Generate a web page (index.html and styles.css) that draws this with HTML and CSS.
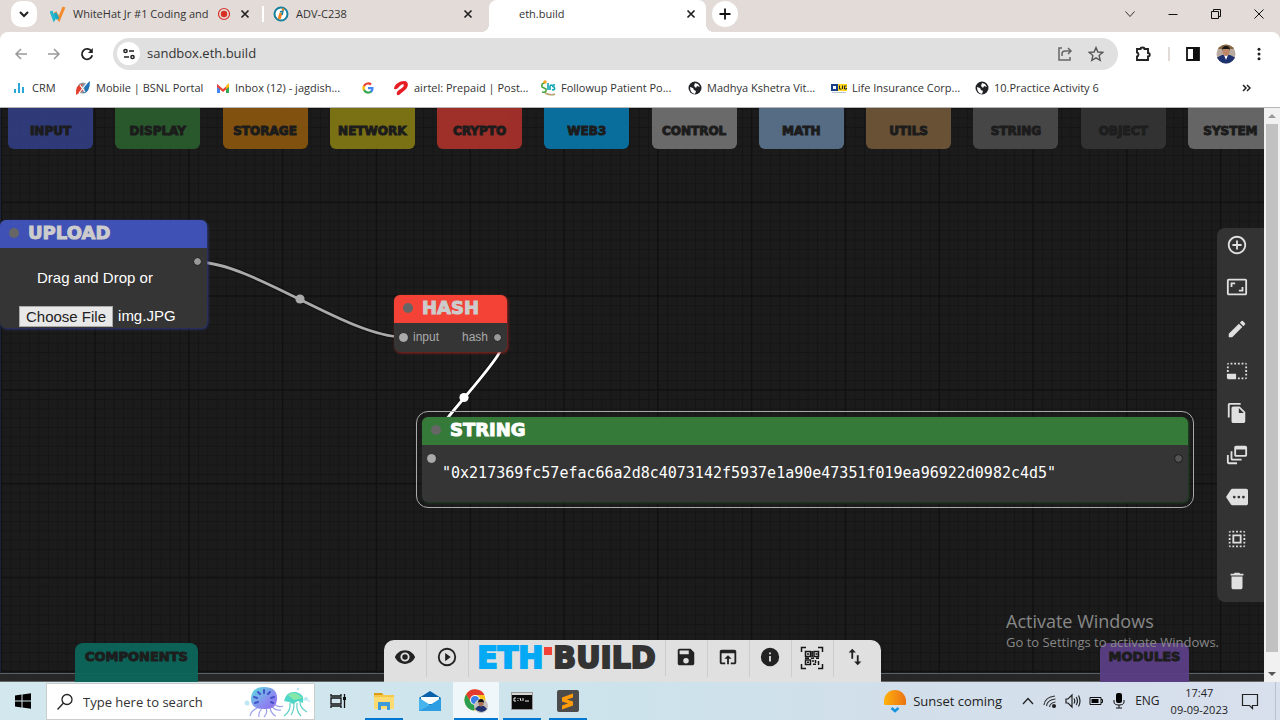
FILE: index.html
```html
<!DOCTYPE html>
<html lang="en">
<head>
<meta charset="utf-8">
<title>eth.build</title>
<link rel="stylesheet" href="styles.css">
</head>
<body>
<header class="tabstrip">
  <button class="round-btn" aria-label="Search tabs"><svg class="i12" viewBox="0 0 12 12"><path d="M2 4l4 4 4-4" fill="none" stroke="#222" stroke-width="2"/></svg></button>
  <div class="tab tab-first">
    <svg class="i16" viewBox="0 0 16 16"><path d="M1 5l3 8 3-5" fill="none" stroke="#1fb5cf" stroke-width="3"/><path d="M5 6l4 7 5-12" fill="none" stroke="#f58a2c" stroke-width="3"/><path d="M5 7l3 6" stroke="#18a9c4" stroke-width="3"/></svg>
    <span class="tab-title">WhiteHat Jr #1 Coding and</span>
    <svg class="i14" viewBox="0 0 14 14"><circle cx="7" cy="7" r="5.500" fill="none" stroke="#d93025" stroke-width="1.200"/><circle cx="7" cy="7" r="3.200" fill="#d93025"/></svg>
    <button class="icon-btn" aria-label="Close tab"><svg class="i10" viewBox="0 0 10 10"><path d="M1.500 1.500l7 7m0-7l-7 7" stroke="#222" stroke-width="1.700"/></svg></button>
  </div>
  <i class="tab-sep"></i>
  <div class="tab tab-second">
    <svg class="i16" viewBox="0 0 16 16"><circle cx="8" cy="8" r="6.500" fill="#fff" stroke="#14809b" stroke-width="2"/><path d="M8 7l-2 6" stroke="#f58220" stroke-width="3"/><path d="M7 6l3-1-1 4" fill="none" stroke="#14809b" stroke-width="1.500"/><circle cx="10" cy="3.500" r="1.200" fill="#f58220"/></svg>
    <span class="tab-title">ADV-C238</span>
    <button class="icon-btn" aria-label="Close tab"><svg class="i10" viewBox="0 0 10 10"><path d="M1.500 1.500l7 7m0-7l-7 7" stroke="#222" stroke-width="1.700"/></svg></button>
  </div>
  <div class="tab tab-active">
    <span class="tab-title">eth.build</span>
    <button class="icon-btn" aria-label="Close tab"><svg class="i10" viewBox="0 0 10 10"><path d="M1.500 1.500l7 7m0-7l-7 7" stroke="#222" stroke-width="1.700"/></svg></button>
  </div>
  <button class="round-btn plus" aria-label="New tab"><svg class="i12" viewBox="0 0 12 12"><path d="M6 .5v11M.5 6h11" stroke="#111" stroke-width="1.800"/></svg></button>
  <div class="window-controls">
    <button class="icon-btn" aria-label="Tab list"><svg class="i12" viewBox="0 0 12 12"><path d="M1.500 3.500L6 8.500l4.500-5" fill="none" stroke="#333"/></svg></button>
    <button class="icon-btn" aria-label="Minimize"><svg class="i12" viewBox="0 0 12 12"><path d="M1.500 6.500h9" stroke="#111"/></svg></button>
    <button class="icon-btn" aria-label="Restore"><svg class="i12" viewBox="0 0 12 12"><path d="M1.500 3.500h7v7h-7zM3.500 3.500v-2h7v7h-2" fill="none" stroke="#111"/></svg></button>
    <button class="icon-btn" aria-label="Close"><svg class="i12" viewBox="0 0 12 12"><path d="M1.500 1.500l9 9m0-9l-9 9" stroke="#111"/></svg></button>
  </div>
</header>

<div class="browser-bar">
  <nav class="toolbar" aria-label="Browser">
    <button class="icon-btn" aria-label="Back"><svg class="i14" viewBox="0 0 14 14"><path d="M13 7H2m5-5L2 7l5 5" fill="none" stroke="#999" stroke-width="1.500"/></svg></button>
    <button class="icon-btn" aria-label="Forward"><svg class="i14" viewBox="0 0 14 14"><path d="M1 7h11M7 2l5 5-5 5" fill="none" stroke="#999" stroke-width="1.500"/></svg></button>
    <button class="icon-btn" aria-label="Reload"><svg class="i14" viewBox="0 0 14 14"><path d="M11.500 4.300A5.200 5.200 0 1 0 12.200 8.200" fill="none" stroke="#222" stroke-width="1.800"/><path d="M12.800 1v5H8z" fill="#222"/></svg></button>
    <div class="omnibox">
      <button class="site-btn" aria-label="Site information"><svg class="i14" viewBox="0 0 14 14" fill="none" stroke="#222" stroke-width="1.500"><circle cx="3.500" cy="4" r="1.600"/><path d="M7 4h5M2 10h5"/><circle cx="10.500" cy="10" r="1.600"/></svg></button>
      <input class="url" type="text" aria-label="Address" value="sandbox.eth.build">
      <button class="icon-btn" aria-label="Share"><svg class="i16" viewBox="0 0 16 16" fill="none" stroke="#666" stroke-width="1.500"><path d="M5 2H2v12h11v-3M5 10V8q0-3 3-3h6M11 2l3 3-3 3"/></svg></button>
      <button class="icon-btn" aria-label="Bookmark"><svg class="i16" viewBox="0 0 16 16"><path d="M8 1.600l1.900 4.400 4.800.4-3.600 3.200 1.100 4.700L8 11.800l-4.200 2.500 1.100-4.700L1.300 6.400 6.100 6z" fill="none" stroke="#555" stroke-width="1.400"/></svg></button>
    </div>
    <div class="browser-tools">
      <button class="icon-btn" aria-label="Extensions"><svg class="i18" viewBox="0 0 18 18"><path d="M3 4h3.500a2 1.500 0 0 1 4 0H14v4a1.500 1.500 0 0 1 0 3.500V15H3v-3.500c2-.5 2-3.500 0-4z" fill="none" stroke="#222" stroke-width="1.900"/></svg></button>
      <i class="bar-sep"></i>
      <button class="icon-btn" aria-label="Side panel"><svg class="i14" viewBox="0 0 14 14"><path d="M1 1h12v12H1z" fill="none" stroke="#111" stroke-width="1.800"/><path d="M7 1h6v12H7z" fill="#111"/></svg></button>
      <button class="icon-btn" aria-label="Profile"><svg class="i20" viewBox="0 0 20 20"><defs><clipPath id="face"><circle cx="10" cy="10" r="9.500"/></clipPath></defs><g clip-path="url(#face)"><path d="M0 0h20v20H0z" fill="#b9aaa0"/><path d="M0 0h20v5H0z" fill="#83623e"/><path d="M0 20V14l6-3h8l6 3v6z" fill="#1e3270"/><path d="M8 11h4l-2 5z" fill="#fff"/><ellipse cx="10" cy="7.500" rx="3.500" ry="4.500" fill="#bd8768"/><path d="M6 7q0-5 4-5t4 5l-1-2H7z" fill="#171717"/></g></svg></button>
      <button class="icon-btn" aria-label="Menu"><svg class="i14" viewBox="0 0 14 14" fill="#222"><circle cx="7" cy="2.200" r="1.500"/><circle cx="7" cy="7" r="1.500"/><circle cx="7" cy="11.800" r="1.500"/></svg></button>
    </div>
  </nav>
  <nav class="bookmarks" aria-label="Bookmarks">
    <a href="#"><svg class="i14" viewBox="0 0 14 14" fill="#2aa7d8"><path d="M1 8h2v4H1zM5 2h2v10H5zM9 6h2v6H9z"/></svg>CRM</a>
    <a href="#"><svg class="i16" viewBox="0 0 16 16"><circle cx="8" cy="8" r="5.500" fill="#8c9aa8"/><path d="M1 15Q0 4 8 4L6 8l3 2z" fill="#e3402f"/><path d="M15 1q0 12-7 12l2-4-2-2z" fill="#1e73b8"/><path d="M4 13l8-10M5 5l5 7" stroke="#fff" stroke-width="1.200"/></svg>Mobile | BSNL Portal</a>
    <a href="#"><svg class="i14" viewBox="0 0 14 14"><path d="M1 3v9h3V6z" fill="#4285f4"/><path d="M13 3v9h-3V6z" fill="#34a853"/><path d="M1 3l6 5 6-5v3l-6 5-6-5z" fill="#ea4335"/><path d="M10 5l3-3v4l-3 2z" fill="#fbbc04"/></svg>Inbox (12) - jagdish...</a>
    <a href="#" aria-label="Google"><svg class="i12" viewBox="0 0 24 24"><path fill="#4285f4" d="M23 12.300c0-.9-.1-1.500-.2-2.200H12v4.300h6.200a5.300 5.300 0 0 1-2.300 3.500v2.900h3.700c2.200-2 3.400-5 3.400-8.500z"/><path fill="#34a853" d="M12 23.500c3.100 0 5.700-1 7.600-2.800l-3.700-2.900c-3.200 2.200-8.300 1-9.900-3.200H2.200v3A11.500 11.500 0 0 0 12 23.500z"/><path fill="#fbbc05" d="M6 14.600c-.6-1.600-.6-3.500 0-5.200v-3H2.200a11.500 11.500 0 0 0 0 11.200z"/><path fill="#ea4335" d="M12 5.100c1.800 0 3.200.6 4.400 1.700l3.300-3.300A11.500 11.500 0 0 0 2.200 6.400L6 9.400a6.300 6.300 0 0 1 6-4.300z"/></svg></a>
    <a href="#"><svg class="i16" viewBox="0 0 16 16"><path d="M1 9C1 4 7 1 11 1c5 0 5 6 1 9l-6 5c-3 1-3-3 0-5l3-2c3-2 2-5-1-3-2 1-3 5-7 4z" fill="#e71d25"/></svg>airtel: Prepaid | Post...</a>
    <a href="#"><svg class="i16" viewBox="0 0 16 16" fill="none" stroke-width="1.600"><path d="M5 3Q1 3 2 7l4 2q1 4-4 3" stroke="#48a643"/><path d="M8 3v7M10 10V6q0-1 2-1M15 5h-2q-1 2 1 2 2 3-2 3" stroke="#12a4b4"/><path d="M5 13q6 3 10 1" stroke="#b4a370"/><circle cx="5" cy="2" r="1" stroke="#f5a623"/></svg>Followup Patient Po...</a>
    <a href="#"><svg class="i14" viewBox="0 0 14 14"><circle cx="7" cy="7" r="6.500" fill="#202124"/><path d="M2 6l3 1 1 2 2 1-1 3q-5-1-5-7zM7 2l3 1 2 3-3-1-1 2-2-2z" fill="#fff"/></svg>Madhya Kshetra Vit...</a>
    <a href="#"><svg class="i16" viewBox="0 0 16 16"><path d="M0 4h7v7H0z" fill="#173f8b"/><path d="M2 6h3v3H2z" fill="#fff"/><path d="M7 4h9v7H7z" fill="#ffd61f"/><path d="M8.500 5.500V9h2m1-3.500V9m4-3h-2v3h2V8" fill="none" stroke="#222"/><path d="M1 12.500h14" stroke="#9ab" stroke-width=".7"/></svg>Life Insurance Corp...</a>
    <a href="#"><svg class="i14" viewBox="0 0 14 14"><circle cx="7" cy="7" r="6.500" fill="#202124"/><path d="M2 6l3 1 1 2 2 1-1 3q-5-1-5-7zM7 2l3 1 2 3-3-1-1 2-2-2z" fill="#fff"/></svg>10.Practice Activity 6</a>
    <button class="icon-btn" aria-label="More bookmarks"><svg class="i10" viewBox="0 0 10 10"><path d="M2 2l3 3-3 3M6 2l3 3-3 3" fill="none" stroke="#222" stroke-width="1.500"/></svg></button>
  </nav>
</div>

<div class="viewport">
  <main class="page">
    <svg class="graph" aria-hidden="true">
      <defs>
        <pattern id="minor" width="9.380" height="9.380" patternUnits="userSpaceOnUse" x="1" y="108.200"><path d="M0 .5h9.400M.5 0v9.400" stroke="#151515"/></pattern>
        <pattern id="major" width="93.800" height="93.800" patternUnits="userSpaceOnUse" x="0.500" y="107.700"><path d="M0 .5h94M.5 0v94" stroke="#101010" stroke-width="1.500"/></pattern>
      </defs>
      <g transform="translate(0 -108)">
        <rect y="108" width="100%" height="100%" fill="#1b1b1b"/>
        <rect y="108" width="100%" height="100%" fill="url(#minor)"/>
        <rect y="108" width="100%" height="100%" fill="url(#major)"/>
        <path d="M.5 108v567" stroke="#1b2338"/>
        <g fill="none" stroke-linecap="round">
          <path d="M197 262C252 262 348 337 403 337" stroke="#111" stroke-width="5"/>
          <path d="M197 262C252 262 348 337 403 337" stroke="#aaa" stroke-width="2.800"/>
          <path d="M498 337C533 337 396 458 431 458" stroke="#111" stroke-width="5"/>
          <path d="M498 337C533 337 396 458 431 458" stroke="#fff" stroke-width="2.800"/>
        </g>
        <circle cx="300" cy="299" r="4.600" fill="#aaa"/>
        <circle cx="464" cy="397.500" r="4.600" fill="#fff"/>
      </g>
    </svg>

    <nav class="categories" aria-label="Node categories">
      <button class="cat c-input">INPUT</button>
      <button class="cat c-display">DISPLAY</button>
      <button class="cat c-storage">STORAGE</button>
      <button class="cat c-network">NETWORK</button>
      <button class="cat c-crypto">CRYPTO</button>
      <button class="cat c-web3">WEB3</button>
      <button class="cat c-control">CONTROL</button>
      <button class="cat c-math">MATH</button>
      <button class="cat c-utils">UTILS</button>
      <button class="cat c-string">STRING</button>
      <button class="cat c-object">OBJECT</button>
      <button class="cat c-system">SYSTEM</button>
    </nav>

    <section class="node upload">
      <h2 class="node-title"><i class="dot"></i>UPLOAD</h2>
      <i class="port out"></i>
      <div class="upload-body">
        <p class="drop-text">Drag and Drop or</p>
        <div class="file-row"><button class="file-btn">Choose File</button><span>img.JPG</span></div>
      </div>
    </section>

    <section class="node hash">
      <h2 class="node-title"><i class="dot"></i>HASH</h2>
      <div class="hash-ports"><i class="port linked"></i><span>input</span><span class="push">hash</span><i class="port"></i></div>
    </section>

    <section class="node string">
      <h2 class="node-title"><i class="dot"></i>STRING</h2>
      <i class="port in linked"></i><i class="port out empty"></i>
      <p class="value">"0x217369fc57efac66a2d8c4073142f5937e1a90e47351f019ea96922d0982c4d5"</p>
    </section>

    <aside class="side-tools" aria-label="Edit tools">
      <button class="icon-btn" aria-label="Add"><svg class="i22" viewBox="0 0 24 24"><path d="M13 7h-2v4H7v2h4v4h2v-4h4v-2h-4V7zm-1-5C6.480 2 2 6.480 2 12s4.480 10 10 10 10-4.480 10-10S17.520 2 12 2zm0 18c-4.410 0-8-3.590-8-8s3.590-8 8-8 8 3.590 8 8-3.590 8-8 8z"/></svg></button>
      <button class="icon-btn" aria-label="Fit view"><svg class="i22" viewBox="0 0 24 24"><path d="M19 12h-2v3h-3v2h5v-5zM7 9h3V7H5v5h2V9zm14-6H3c-1.100 0-2 .9-2 2v14c0 1.100.9 2 2 2h18c1.100 0 2-.9 2-2V5c0-1.100-.9-2-2-2zm0 16H3V5h18v14z"/></svg></button>
      <button class="icon-btn" aria-label="Edit"><svg class="i22" viewBox="0 0 24 24"><path d="M3 17.250V21h3.750L17.810 9.940l-3.750-3.750L3 17.250zM20.710 7.040a1 1 0 0 0 0-1.410l-2.340-2.340a1 1 0 0 0-1.410 0l-1.830 1.830 3.750 3.750 1.830-1.830z"/></svg></button>
      <button class="icon-btn" aria-label="Resize"><svg class="i22" viewBox="0 0 24 24"><path d="M23 15h-2v2h2v-2zm0-4h-2v2h2v-2zm0 8h-2v2c1 0 2-1 2-2zM15 3h-2v2h2V3zm8 4h-2v2h2V7zm-2-4v2h2c0-1-1-2-2-2zM3 21h8v-6H1v4c0 1.100.9 2 2 2zM3 7H1v2h2V7zm12 12h-2v2h2v-2zm4-16h-2v2h2V3zm0 16h-2v2h2v-2zM3 3C2 3 1 4 1 5h2V3zm0 8H1v2h2v-2zm8-8H9v2h2V3zM7 3H5v2h2V3z"/></svg></button>
      <button class="icon-btn" aria-label="Copy"><svg class="i22" viewBox="0 0 24 24"><path d="M16 1H4c-1.100 0-2 .9-2 2v14h2V3h12V1zm-1 4l6 6v10c0 1.100-.9 2-2 2H7.990C6.890 23 6 22.100 6 21V7c0-1.100.9-2 2-2h7zm-1 7h5.500L14 6.500V12z"/></svg></button>
      <button class="icon-btn" aria-label="Stack"><svg class="i22" viewBox="0 0 24 24"><path d="M1 12h2v8h9v2H3c-1.100 0-2-.9-2-2zM5 8h2v8h10v2H7c-1.100 0-2-.9-2-2zM11 2h10c1.100 0 2 .9 2 2v8c0 1.100-.9 2-2 2H11c-1.100 0-2-.9-2-2V4c0-1.100.9-2 2-2zm0 4v6h10V6z"/></svg></button>
      <button class="icon-btn" aria-label="Label"><svg class="i22" viewBox="0 0 24 24"><path d="M22 3H7c-.69 0-1.230.350-1.590.880L0 12l5.410 8.110c.360.530.970.890 1.660.890H22c1.100 0 2-.9 2-2V5c0-1.100-.9-2-2-2zM9 13.500a1.500 1.500 0 1 1 0-3 1.500 1.500 0 0 1 0 3zm5 0a1.500 1.500 0 1 1 0-3 1.500 1.500 0 0 1 0 3zm5 0a1.500 1.500 0 1 1 0-3 1.500 1.500 0 0 1 0 3z"/></svg></button>
      <button class="icon-btn" aria-label="Select all"><svg class="i22" viewBox="0 0 24 24"><path d="M3 5h2V3c-1.100 0-2 .9-2 2zm0 8h2v-2H3v2zm4 8h2v-2H7v2zM3 9h2V7H3v2zm10-6h-2v2h2V3zm6 0v2h2c0-1.100-.9-2-2-2zM5 21v-2H3c0 1.100.9 2 2 2zm-2-4h2v-2H3v2zM9 3H7v2h2V3zm2 18h2v-2h-2v2zm8-8h2v-2h-2v2zm0 8c1.100 0 2-.9 2-2h-2v2zm0-12h2V7h-2v2zm0 8h2v-2h-2v2zm-4 4h2v-2h-2v2zm0-16h2V3h-2v2zM7 17h10V7H7v10zm2-8h6v6H9V9z"/></svg></button>
      <button class="icon-btn" aria-label="Delete"><svg class="i22" viewBox="0 0 24 24"><path d="M6 19c0 1.100.9 2 2 2h8c1.100 0 2-.9 2-2V7H6v12zM19 4h-3.500l-1-1h-5l-1 1H5v2h14V4z"/></svg></button>
    </aside>

    <div class="activate"><p class="activate-title">Activate Windows</p><p class="activate-sub">Go to Settings to activate Windows.</p></div>

    <footer class="dock">
      <button class="drawer components">COMPONENTS</button>
      <div class="dock-bar">
        <button class="dock-cell" aria-label="View"><svg class="i22" viewBox="0 0 24 24"><path d="M12 4.500C7 4.500 2.730 7.610 1 12c1.730 4.390 6 7.500 11 7.500s9.270-3.110 11-7.500c-1.730-4.390-6-7.500-11-7.500zM12 17a5 5 0 1 1 0-10 5 5 0 0 1 0 10zm0-8a3 3 0 1 0 0 6 3 3 0 0 0 0-6z"/></svg></button>
        <button class="dock-cell" aria-label="Run"><svg class="i22" viewBox="0 0 24 24"><path d="M10 16.500l6-4.500-6-4.500v9zM12 2a10 10 0 1 0 0 20 10 10 0 0 0 0-20zm0 18a8 8 0 1 1 0-16 8 8 0 0 1 0 16z"/></svg></button>
        <a class="logo" href="#"><span class="eth">ETH</span><i class="logo-dot"></i><span>BUILD</span></a>
        <button class="dock-cell" aria-label="Save"><svg class="i22" viewBox="0 0 24 24"><path d="M17 3H5c-1.110 0-2 .9-2 2v14c0 1.100.89 2 2 2h14c1.100 0 2-.9 2-2V7l-4-4zm-5 16a3 3 0 1 1 0-6 3 3 0 0 1 0 6zm3-10H5V5h10v4z"/></svg></button>
        <button class="dock-cell" aria-label="Open"><svg class="i22" viewBox="0 0 24 24"><path d="M19 4H5c-1.110 0-2 .9-2 2v12c0 1.100.89 2 2 2h4v-2H5V8h14v10h-4v2h4c1.100 0 2-.9 2-2V6c0-1.100-.89-2-2-2zm-7 6l-4 4h3v6h2v-6h3l-4-4z"/></svg></button>
        <button class="dock-cell" aria-label="About"><svg class="i22" viewBox="0 0 24 24"><path d="M12 2a10 10 0 1 0 0 20 10 10 0 0 0 0-20zm1 15h-2v-6h2v6zm0-8h-2V7h2v2z"/></svg></button>
        <button class="dock-cell" aria-label="Scan QR"><svg class="i24" viewBox="0 0 24 24" fill="none" stroke="#151515" stroke-width="1.500"><path d="M1.500 6V1.500H6M18 1.500h4.500V6M22.500 18v4.500H18M6 22.500H1.500V18"/><path d="M5.500 5.500h5v5h-5zM14 5.500h4.500v5H14zM5.500 14h5v4.500h-5zM12.200 5v6M5 12.300h4M11 12.300h3M16 12.300h3M13 14v2M15.500 14v3M13 18.300h3M18.500 15v4M7 8h2M15.500 8h2M7 16.300h2"/></svg></button>
        <button class="dock-cell last" aria-label="Transfer"><svg class="i22" viewBox="0 0 24 24"><path d="M9 3L5 6.990h3V14h2V6.990h3L9 3zm7 14.010V10h-2v7.010h-3L15 21l4-3.990h-3z"/></svg></button>
      </div>
      <button class="drawer modules">MODULES</button>
    </footer>
  </main>
  <div class="scrollbar" aria-hidden="true"><i class="arrow up"></i><i class="thumb"></i><i class="arrow down"></i></div>
</div>

<footer class="taskbar">
  <button class="task start" aria-label="Start"><svg class="i16" viewBox="0 0 16 16"><path d="M0 2.500L6.500 1.600v6H0zM7.500 1.400L16 .3v7.300H7.500zM0 8.500h6.500v6L0 13.600zM7.500 8.500H16v7.300l-8.500-1.200z"/></svg></button>
  <label class="search">
    <svg class="i18" viewBox="0 0 18 18"><circle cx="11" cy="6.500" r="5" fill="none" stroke="#222" stroke-width="1.300"/><path d="M7.500 10L1.500 16.500" stroke="#222" stroke-width="1.300"/></svg>
    <input type="text" aria-label="Type here to search" placeholder="Type here to search">
    <svg class="jelly" viewBox="0 0 68 34">
      <defs><linearGradient id="j" x1="0" x2="1" y2="1"><stop stop-color="#56e2dc"/><stop offset=".6" stop-color="#8a8cf0"/><stop offset="1" stop-color="#8d6be8"/></linearGradient></defs>
      <g fill="none" stroke="#9ba0ea" stroke-width="1.200"><path d="M14 23q-6 3-7 8M19 23q-4 5-3 9M23 23q2 5-2 9M27 23q2 7 6 8M29 22q4 4 9 3M31 19q5 4 9 2"/></g>
      <path d="M8 13Q9 2 21 2q14 0 13 13-1 9-11 9Q7 25 8 13z" fill="url(#j)"/>
      <g stroke="#4352c8" stroke-width="2" stroke-linecap="round"><path d="M15 17l-3 1M14 13l-3-1M17 9l-2-2M21 8V5M25 9l2-2M28 13l3-1M28 17l2 1"/></g>
      <g fill="none" stroke="#62cfc9" stroke-width="1.200"><path d="M47 18q1 8-6 13M51 18q0 8-3 12M54 18q-1 8 4 13M57 17q0 6 7 10"/></g>
      <path d="M41 16Q43 6 53 7q9 2 7 11l-5-2-5 3-4-2z" fill="#4fd6c6"/><path d="M45 10q7-5 14 3l-8 2z" fill="#86e8a8"/>
      <g fill="#bde8f3"><circle cx="4" cy="18" r="2.500"/><circle cx="63" cy="14" r="2"/><circle cx="55" cy="4" r="1.300"/><circle cx="66" cy="16" r="1"/></g>
    </svg>
  </label>
  <button class="task" aria-label="Task view"><svg class="i16" viewBox="0 0 16 16" fill="none" stroke="#111" stroke-width="1.300"><path d="M1 1v2h10V1M1 5h10v6H1zM1 15v-2h10v2M14.500 1v14"/><path d="M13 4h3v3h-3z" fill="#111" stroke="none"/></svg></button>
  <button class="task open" aria-label="File Explorer"><svg class="i22" viewBox="0 0 22 22"><path d="M1 3h8l2 2h10v14H1z" fill="#f9c846"/><path d="M1 7h20v12H1z" fill="#ffdc72"/><path d="M1 3h8l1 2H1z" fill="#dd9b18"/><path d="M5 20v-8h12v8h-3v-4H8v4z" fill="#3e9bdb"/></svg></button>
  <button class="task" aria-label="Mail"><svg class="i24" viewBox="0 0 24 24"><path d="M1 9l11-7 11 7v13H1z" fill="#0861aa"/><path d="M3 8h18v7H3z" fill="#fff"/><path d="M1 9l11 7 11-7v13H1z" fill="#2e9de2"/><path d="M1 9l11 7L1 22z" fill="#47b5ed"/></svg></button>
  <button class="task open active" aria-label="Chrome"><svg class="i24" viewBox="0 0 24 24"><circle cx="11" cy="11" r="10.500" fill="#fbc51d"/><path d="M2 5.500A10.500 10.500 0 0 1 20.500 6H11l-4 7z" fill="#e33b2e"/><path d="M2 5.500l5 8 5 3-2 5A10.500 10.500 0 0 1 2 5.500z" fill="#2b9f50"/><circle cx="11" cy="11" r="5" fill="#fff"/><circle cx="11" cy="11" r="4" fill="#3b7de8"/><circle cx="17" cy="17" r="7" fill="#c6c0bd"/><path d="M11 20l3-3h6l3 3q-5 6-12 0z" fill="#1e3270"/><ellipse cx="17" cy="14.500" rx="2.500" ry="3" fill="#a87356"/><path d="M14 14q0-4 3-4t3 4l-1-1h-4z" fill="#111"/></svg></button>
  <button class="task open" aria-label="Command Prompt"><svg class="i22" viewBox="0 0 22 22"><path d="M.5 2.500h21v17H.5z" fill="#0b0b0b" stroke="#999"/><path d="M1 3h20v2H1z" fill="#d7d7d7"/><path d="M3 8h2M3 8v3h2M7 8v.8M7 10v1M9 8l1 3M12 8v3M14 11h4" stroke="#eee" fill="none"/></svg></button>
  <button class="task open" aria-label="Sublime Text"><svg class="i24" viewBox="0 0 24 24"><rect x="1" y="1" width="22" height="22" rx="2" fill="#4b4b4b"/><path d="M6 8.500l11-4v4l-6 2 6 2v4l-11 4v-4l6-2-6-2z" fill="#ff9a0a"/></svg></button>
  <div class="tray">
    <button class="weather"><svg class="i24" viewBox="0 0 24 24"><defs><linearGradient id="sun"><stop stop-color="#ffb20d"/><stop offset="1" stop-color="#eb7214"/></linearGradient></defs><path d="M1 12A11 11 0 0 1 23 12v3q0 1-1 1H2q-1 0-1-1z" fill="url(#sun)"/><path d="M8.500 19l3.500 3 3.500-3" fill="none" stroke="#1793df" stroke-width="2.500"/></svg>Sunset coming</button>
    <button class="icon-btn" aria-label="Hidden icons"><svg class="i14" viewBox="0 0 14 14"><path d="M2 10l5-5.500L12 10" fill="none" stroke="#222" stroke-width="1.300"/></svg></button>
    <button class="icon-btn" aria-label="Network"><svg class="i14" viewBox="0 0 14 14" fill="none" stroke="#333" stroke-width="1.200"><path d="M1 11Q2 3 12 2M3.500 12Q4 6 12.500 5M6.500 13Q7 9 12.500 8"/><circle cx="11" cy="12" r="1.500" fill="#111"/></svg></button>
    <button class="icon-btn" aria-label="Volume"><svg class="i16" viewBox="0 0 16 16" fill="none" stroke="#222" stroke-width="1.200"><path d="M1 6h2l4-4v12l-4-4H1zM9 5.500q1.500 2.500 0 5M11.200 4q2.500 4 0 8M13.500 2.500q3 5.500 0 11"/></svg></button>
    <button class="icon-btn" aria-label="Battery"><svg class="i14" viewBox="0 0 14 14"><path d="M1 3.500h11v7H1zM12 5.500h1.500v3H12" fill="none" stroke="#111"/><path d="M2.500 5h7v4h-7z"/></svg></button>
    <button class="icon-btn" aria-label="Microphone"><svg class="i16" viewBox="0 0 16 16"><rect x="5" width="6" height="10" rx="2"/><path d="M3 7v2q0 3 5 3t5-3V7M8 12v3M5 15h6" fill="none" stroke="#111"/></svg></button>
    <span class="lang">ENG</span>
    <time class="clock">17:47<br>09-09-2023</time>
    <button class="icon-btn" aria-label="Notifications"><svg class="i18" viewBox="0 0 18 18"><path d="M1.500 2.500h15v11h-5v3l-3-3h-7z" fill="none" stroke="#222" stroke-width="1.200"/></svg></button>
    <i class="desktop-edge"></i>
  </div>
</footer>
</body>
</html>
```
FILE: styles.css
```css
* { box-sizing: border-box; }
body {
  margin: 0;
  height: 100vh;
  display: flex;
  flex-direction: column;
  overflow: hidden;
  background: #fff;
  color: #333;
  font: 11px/16px "Open Sans", "Noto Sans", sans-serif;
}
button, input { font: inherit; color: inherit; border: 0; padding: 0; background: none; }
h2, p { margin: 0; }
a { color: inherit; text-decoration: none; }
svg { display: block; flex: none; }
.i10 { width: 10px; height: 10px; }
.i12 { width: 12px; height: 12px; }
.i14 { width: 14px; height: 14px; }
.i16 { width: 16px; height: 16px; }
.i18 { width: 18px; height: 18px; }
.i20 { width: 20px; height: 20px; }
.i22 { width: 22px; height: 22px; }
.i24 { width: 24px; height: 24px; }
.icon-btn { display: flex; align-items: center; justify-content: center; flex: none; }

/* Browser tabs */
.tabstrip { display: flex; height: 32px; flex: none; padding: 0 15px 0 11px; background: #e3dbd8; }
.round-btn { display: flex; align-items: center; justify-content: center; width: 26px; height: 26px; margin-top: 1px; border-radius: 10px; background: #fff; flex: none; }
.plus { border-radius: 50%; margin-left: 6px; }
.tab { display: flex; align-items: center; height: 28px; }
.tab-first { width: 225px; padding: 0 12px 0 13px; gap: 7px; }
.tab-title { flex: 1; white-space: nowrap; }
.tab-first .icon-btn { margin-left: 2px; }
.tab-sep { width: 2px; height: 16px; margin-top: 6px; background: #fff; }
.tab-second { width: 225px; padding: 0 16px 0 9px; gap: 7px; }
.tab-active { position: relative; width: 217px; height: 32px; padding: 0 10px 4px 30px; background: #fff; border-radius: 8px 8px 0 0; }
.tab-active::before, .tab-active::after { content: ""; position: absolute; bottom: 0; width: 8px; height: 8px; }
.tab-active::before { left: -8px; background: radial-gradient(circle at 0 0, transparent 8px, #fff 8px); }
.tab-active::after { right: -8px; background: radial-gradient(circle at 100% 0, transparent 8px, #fff 8px); }
.window-controls { display: flex; gap: 31px; margin-left: auto; height: 27px; }

/* Address bar and bookmarks */
.browser-bar { flex: none; background: #e3dbd8; border-bottom: 1px solid #b5b5b8; }
.toolbar { display: flex; align-items: center; height: 43px; padding: 0 14px; gap: 19px; background: #fff; border-radius: 8px 8px 0 0; }
.omnibox { display: flex; flex: 1; align-items: center; height: 32px; padding: 0 14px 0 4px; border-radius: 16px; background: #e0e0e0; gap: 15px; }
.site-btn { display: flex; align-items: center; justify-content: center; width: 23px; height: 23px; border-radius: 50%; background: #fff; }
.url { flex: 1; min-width: 0; margin-left: -8px; font-size: 13px; line-height: 16px; padding-bottom: 1px; outline: 0; }
.browser-tools { display: flex; align-items: center; gap: 16px; margin-left: -3px; }
.bar-sep { width: 2px; height: 14px; background: #e3dbd8; }
.bookmarks { display: grid; grid-template-columns: 62px 141px 146px 31px 147px 148px 143px 144px 1fr auto; align-items: center; height: 32px; padding: 0 29px 7px 13px; background: #fff; }
.bookmarks a { display: flex; align-items: center; gap: 5px; white-space: nowrap; }

/* Page */
.viewport { display: flex; flex: 1; min-height: 0; }
.page { position: relative; flex: 1; min-width: 0; overflow: hidden; background: #1b1b1b; font-family: "Liberation Sans", Arial, sans-serif; }
.graph { position: absolute; width: 100%; height: 100%; }
.categories { position: relative; display: flex; justify-content: space-between; padding-left: 8px; margin-right: -9px; }
.cat { width: 85px; height: 41px; padding-top: 4px; border-radius: 0 0 6px 6px; font: bold 12px/16px "DejaVu Sans", sans-serif; color: #1d1d1d; -webkit-text-stroke: 1px #1d1d1d; opacity: .97; }
.c-input { background: #303b7b; }
.c-display { background: #2a5a2d; }
.c-storage { background: #85530f; }
.c-network { background: #7d7414; }
.c-crypto { background: #a3302a; }
.c-web3 { background: #0a71a2; }
.c-control { background: #6d6d6d; }
.c-math { background: #586f89; }
.c-utils { background: #6b5336; }
.c-string { background: #484848; }
.c-object { background: #333; color: #222; }
.c-system { background: #686868; }

/* Graph nodes */
.node { position: absolute; background: #353535; border-radius: 6px; color: #ddd; }
.node-title { display: flex; align-items: center; height: 28px; gap: 9px; padding: 0 0 2px 9px; border-radius: 6px 6px 0 0; font: bold 18px/24px "DejaVu Sans", sans-serif; color: #ccc; -webkit-text-stroke: 1px currentColor; }
.dot { width: 10px; height: 10px; border-radius: 50%; background: #666; }
.port { display: block; width: 9px; height: 9px; border-radius: 50%; border: 1px solid #1b1b1b; background: #999; }
.linked { background: #aaa; border-color: #aaa; }
.empty { background: #555; }
.node > .port { position: absolute; top: 37px; }
.out { right: 5px; }
.in { left: 5px; }
.upload { left: 0; top: 112px; width: 207px; box-shadow: 1px 1px 3px #303c80; }
.upload .node-title { background: #3f51b5; }
.upload-body { display: grid; gap: 18px; padding: 20px 8px 1px 19px; font-size: 15px; line-height: 20px; color: #fff; }
.drop-text { padding-left: 18px; }
.file-row { display: flex; gap: 5px; }
.file-btn { height: 21px; padding: 0 6px; border: 1px solid #aaa; background: #e8e8e8; color: #222; line-height: 19px; }
.hash { left: 394px; top: 187px; width: 113px; box-shadow: 1px 1px 3px #9a2721; }
.hash .node-title { background: #f44336; }
.hash-ports { display: flex; align-items: center; gap: 5px; height: 29px; padding: 0 5px 1px; font-size: 12px; color: #aaa; }
.push { margin-left: auto; }
.string { left: 422px; top: 309px; right: 76px; height: 85px; box-shadow: 1px 1px 3px #244626; }
.string::before { content: ""; position: absolute; inset: -6px; border: 1px solid #aaa; border-radius: 12px; }
.string .node-title { background: #357a38; color: #fff; }
.value { padding: 18px 20px; font: 15px/20px "DejaVu Sans Mono", monospace; color: #fff; white-space: nowrap; }

.side-tools { position: absolute; right: 0; top: 120px; display: grid; gap: 20px; padding: 6px 16px 10px 9px; border-radius: 8px 0 0 8px; background: #333; fill: #e0e0e0; }
.activate { position: absolute; left: calc(100% - 258px); bottom: 31px; z-index: 2; color: #888; font-family: "Open Sans", sans-serif; pointer-events: none; white-space: nowrap; }
.activate-title { font-size: 18px; line-height: 24px; }
.activate-sub { font-size: 13px; line-height: 18px; }
.dock { position: absolute; inset: auto 0 0; display: grid; grid-template-columns: 1fr auto 1fr; align-items: end; padding: 0 75px; }
.dock::before { content: ""; position: absolute; inset: auto 0 0; height: 7px; border-top: 1px solid #59616b; border-bottom: 1px solid #666; background: #272727; }
.drawer { position: relative; justify-self: start; height: 39px; padding: 0 0 12px; border-radius: 8px 8px 0 0; font: bold 13px/16px "DejaVu Sans", sans-serif; color: #1d1d1d; -webkit-text-stroke: 1px #1d1d1d; }
.components { width: 123px; background: #0d665bf2; }
.modules { width: 89px; justify-self: end; background: #5b3f85f2; }
.dock-bar { position: relative; display: flex; height: 42px; border-radius: 10px 10px 0 0; background: #e0e0e0; fill: #222; }
.dock-cell { display: flex; width: 42px; height: 37px; padding-top: 6px; justify-content: center; border-right: 1px solid #cdcdcd; }
.dock-cell:first-child { width: 43px; }
.last { width: 47px; border: 0; padding-right: 5px; }
.logo { display: flex; align-items: center; justify-content: center; width: 197px; height: 36px; font: bold 30px/32px "DejaVu Sans", sans-serif; color: #333; -webkit-text-stroke: 2px currentColor; border-right: 1px solid #cdcdcd; }
.eth { color: #03a9f4; }
.logo-dot { width: 8px; height: 8px; margin: 0 1px 14px; background: #f44336; }

.scrollbar { display: flex; flex-direction: column; align-items: center; width: 16px; flex: none; background: #f1f1f1; }
.thumb { width: 12px; flex: 1; margin-bottom: 14px; background: #c1c1c1; }
.arrow { display: grid; place-items: center; height: 16px; }
.arrow::before { content: ""; border: 4px solid transparent; border-top-width: 0; border-bottom-color: #999; }
.down::before { border-width: 4px 4px 0; border-top-color: #555; }

/* Taskbar */
.taskbar { display: flex; flex: none; height: 38px; background: linear-gradient(90deg, #d3e8ee, #cde3ec 50%, #d2dfeb 70%, #d8dfed); color: #222; font-size: 13px; }
.task { display: grid; place-items: center; width: 46px; height: 38px; flex: none; position: relative; }
.open::after { content: ""; position: absolute; inset: auto 4px 0; height: 2px; background: #0078d4; }
.active { background: #eff7fa; }
.active::after { inset: auto 1px 0; }
.search { display: flex; align-items: center; width: 269px; height: 37px; margin-top: 1px; padding: 0 3px 0 9px; gap: 9px; border: 1px solid #ccc; background: #fff; }
.search input { flex: 1; min-width: 0; outline: 0; }
.search input::placeholder { color: #333; opacity: 1; }
.jelly { width: 68px; height: 34px; }
.tray { display: flex; align-items: center; gap: 8px; margin-left: auto; }
.weather { display: flex; align-items: center; gap: 6px; margin-right: 11px; }
.lang { font-size: 12px; }
.clock { margin-left: 3px; text-align: center; font-size: 11px; line-height: 17px; }
.tray .clock + .icon-btn { margin-left: 5px; }
.desktop-edge { width: 5px; height: 38px; margin-left: 8px; border-left: 1px solid #b9c2cc; }
```
